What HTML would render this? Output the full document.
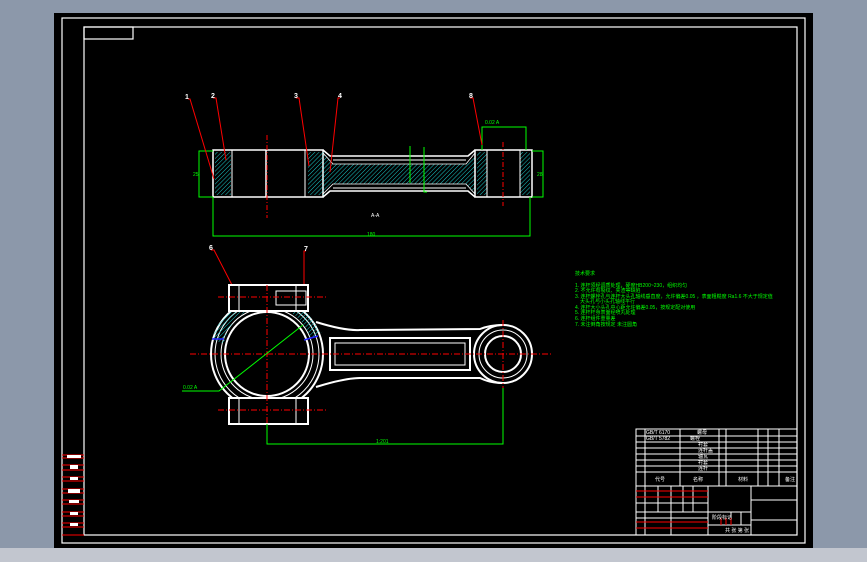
<!DOCTYPE html>
<html><head><style>
html,body{margin:0;padding:0;width:867px;height:562px;overflow:hidden;background:#8c98aa}
svg{display:block}
text{font-family:"Liberation Sans","Noto Sans CJK SC",sans-serif}
</style></head><body>
<svg width="867" height="562" viewBox="0 0 867 562" xmlns="http://www.w3.org/2000/svg">
<defs>
<pattern id="h" width="3" height="3" patternUnits="userSpaceOnUse" patternTransform="rotate(45)">
<line x1="0" y1="0" x2="0" y2="3" stroke="#19c8c8" stroke-width="1"/></pattern>
</defs>
<rect x="0" y="548" width="867" height="14" fill="#c2c6cf"/>
<rect x="54" y="13" width="759" height="535" fill="#000"/>
<g fill="none" stroke="#fff" stroke-width="1.2">
<rect x="62" y="18" width="743" height="525"/>
<rect x="84" y="27" width="713" height="508"/>
<rect x="84" y="27" width="49" height="12"/>
</g>
<g stroke="#f00" stroke-width="1">
<line x1="62" y1="455" x2="84" y2="455"/><line x1="62" y1="458" x2="84" y2="458"/>
<line x1="62" y1="465" x2="84" y2="465"/><line x1="62" y1="470" x2="84" y2="470"/>
<line x1="62" y1="477" x2="84" y2="477"/><line x1="62" y1="481" x2="84" y2="481"/>
<line x1="62" y1="489" x2="84" y2="489"/><line x1="62" y1="493" x2="84" y2="493"/>
<line x1="62" y1="500" x2="84" y2="500"/><line x1="62" y1="504" x2="84" y2="504"/>
<line x1="62" y1="512" x2="84" y2="512"/><line x1="62" y1="516" x2="84" y2="516"/>
<line x1="62" y1="523" x2="84" y2="523"/><line x1="62" y1="527" x2="84" y2="527"/>
<line x1="62" y1="535" x2="84" y2="535"/>
</g>
<g fill="#fff"><rect x="67" y="455" width="14" height="3"/><rect x="70" y="465" width="8" height="4"/><rect x="70" y="477" width="8" height="3"/><rect x="68" y="489" width="12" height="4"/><rect x="69" y="500" width="10" height="3"/><rect x="70" y="512" width="8" height="3"/><rect x="70" y="523" width="8" height="3"/></g>

<!-- TOP VIEW -->
<rect x="213" y="150" width="110" height="47" fill="none" stroke="#fff" stroke-width="1.5"/>
<rect x="215" y="152" width="16" height="43" fill="url(#h)"/>
<line x1="266" y1="150" x2="266" y2="197" stroke="#fff" stroke-width="1.5"/>
<line x1="232" y1="150" x2="232" y2="197" stroke="#fff"/>
<line x1="305" y1="150" x2="305" y2="197" stroke="#fff"/>
<rect x="308" y="152" width="16" height="43" fill="url(#h)"/>
<path d="M323 150 L330 156 L468 156 L475 150 M323 197 L330 191 L468 191 L475 197" fill="none" stroke="#fff" stroke-width="1.5"/>
<path d="M323 153 L333 164 L466 164 L475 153 L475 194 L466 184 L333 184 L323 194Z" fill="url(#h)" stroke="#fff" stroke-width="0.8"/>
<line x1="333" y1="160" x2="466" y2="160" stroke="#fff"/><line x1="333" y1="188" x2="466" y2="188" stroke="#fff"/>
<rect x="475" y="150" width="57" height="47" fill="none" stroke="#fff" stroke-width="1.5"/>
<rect x="477" y="152" width="10" height="43" fill="url(#h)"/>
<rect x="520" y="152" width="10" height="43" fill="url(#h)"/>
<line x1="487" y1="150" x2="487" y2="197" stroke="#fff"/><line x1="520" y1="150" x2="520" y2="197" stroke="#fff"/>
<g stroke="#f00" stroke-dasharray="5 2 1 2"><line x1="267" y1="135" x2="267" y2="218"/><line x1="503" y1="142" x2="503" y2="206"/></g>
<g fill="none" stroke="#0f0" stroke-width="1">
<path d="M213 151 H199 V197 H213"/><path d="M532 151 H543 V197 H532"/>
<path d="M213 197 V236 H530 V197"/><path d="M482 150 V127 H526 V150"/>
<path d="M410 146 V183"/><path d="M424 147 V192 H427"/>
</g>
<g fill="#0f0" font-size="5"><text x="367" y="236">180</text><text x="485" y="124">0.02 A</text><text x="193" y="176">25</text><text x="537" y="176">28</text></g>
<text x="371" y="217" fill="#fff" font-size="5">A-A</text>
<g stroke="#f00" stroke-width="1" fill="none">
<path d="M188 99 L190 99 L214 179"/><path d="M213 98 L216 98 L226 160"/><path d="M296 98 L299 98 L309 166"/><path d="M340 98 L338 98 L330 172"/><path d="M470 98 L473 98 L482 145"/>
<path d="M211 250 L214 250 L232 285"/><path d="M306 251 L304 251 L304 302"/>
</g>
<g fill="#fff" font-size="7" font-weight="bold"><text x="185" y="99">1</text><text x="211" y="98">2</text><text x="294" y="98">3</text><text x="338" y="98">4</text><text x="469" y="98">8</text><text x="209" y="250">6</text><text x="304" y="251">7</text></g>

<!-- BOTTOM VIEW -->
<path d="M316 322 Q345 331 360 330 L480 329 Q490 325 503 325 M316 387 Q345 378 360 378 L480 378 Q490 383 503 383" fill="none" stroke="#fff" stroke-width="2"/>
<g fill="none" stroke="#fff" stroke-width="2">
<circle cx="267" cy="354" r="56"/><circle cx="267" cy="354" r="42"/>
<circle cx="503" cy="354" r="29"/><circle cx="503" cy="354" r="18"/>
<rect x="330" y="338" width="140" height="32"/>
</g>
<g fill="none" stroke="#fff" stroke-width="1">
<circle cx="267" cy="354" r="52"/><circle cx="267" cy="354" r="46"/><circle cx="503" cy="354" r="24"/>
<rect x="335" y="343" width="130" height="22"/>
</g>
<path d="M212 339 A57 57 0 0 1 320 333 L337 325 L310 338 A44 44 0 0 0 224 344 Z" fill="url(#h)"/>
<g fill="#000" stroke="#fff" stroke-width="2">
<rect x="229" y="285" width="79" height="26"/><rect x="229" y="398" width="79" height="26"/>
</g>
<g fill="none" stroke="#fff" stroke-width="1">
<line x1="239" y1="285" x2="239" y2="311"/><line x1="296" y1="285" x2="296" y2="311"/>
<line x1="239" y1="398" x2="239" y2="424"/><line x1="296" y1="398" x2="296" y2="424"/>
<rect x="276" y="291" width="30" height="14"/>
</g>
<g stroke="#f00" stroke-dasharray="6 2 1 2">
<line x1="190" y1="354" x2="553" y2="354"/><line x1="267" y1="285" x2="267" y2="424"/><line x1="503" y1="320" x2="503" y2="388"/>
<line x1="218" y1="297" x2="326" y2="297"/><line x1="218" y1="410" x2="326" y2="410"/>
</g>
<g stroke="#22f" stroke-width="1.5"><path d="M212 339 L224 339 M304 340 L318 336"/></g>
<g fill="none" stroke="#0f0"><path d="M267 424 V444 H503 V388"/><path d="M303 325 L219 391 H182"/></g>
<g fill="#0f0" font-size="5"><text x="376" y="443">1:201</text><text x="183" y="389">0.02 A</text></g>

<g fill="#0f0" font-size="5"><text x="575" y="275">技术要求</text>
<text x="575" y="287">1. 连杆须经调质处理，硬度HB200~230，组织均匀</text>
<text x="575" y="292">2. 不允许有裂纹、夹渣等缺陷</text>
<text x="575" y="298">3. 连杆螺栓孔与连杆大头孔轴线垂直度，允许偏差0.05 ，表面粗糙度 Ra1.6 不大于规定值</text>
<text x="580" y="303">大头孔与小头孔轴线平行</text>
<text x="575" y="309">4. 连杆大小头孔中心距允许偏差0.05，按规定配对使用</text>
<text x="575" y="314">5. 连杆杆身表面经喷丸处理</text>
<text x="575" y="320">6. 连杆组件重量差</text>
<text x="575" y="326">7. 未注倒角按规定 未注圆角</text></g>

<g fill="none" stroke="#fff" stroke-width="1">
<rect x="636" y="429" width="161" height="106"/>
<path d="M636 436 H797 M636 442 H797 M636 448 H797 M636 454 H797 M636 460 H797 M636 466 H797 M636 472 H797 M636 486 H797"/>
<path d="M645 429 V486 M680 429 V486 M719 429 V486 M726 429 V486 M758 429 V486 M768 429 V486 M779 429 V486"/>
<path d="M708 486 V535 M751 486 V535 M751 500 H797 M751 520 H797"/>
<path d="M636 503 H708 M636 512 H751 M636 518 H708 M708 525 H751"/>
<path d="M645 486 V535 M658 486 V512 M671 486 V535 M683 486 V512 M693 486 V512"/>
<path d="M731 512 V525 M741 512 V525"/>
</g>
<g stroke="#f00"><path d="M636 491 H708 M636 497 H708 M636 522 H708 M636 528 H708 M721 518 V525 M726 518 V525 M731 518 V525"/></g>
<g fill="#fff" font-size="5"><text x="646" y="434">GB/T 6170</text><text x="646" y="440">GB/T 5782</text><text x="697" y="434">螺母</text><text x="690" y="440">螺栓</text><text x="698" y="446">衬套</text><text x="698" y="452">连杆盖</text><text x="698" y="458">轴瓦</text><text x="698" y="464">衬套</text><text x="698" y="470">连杆</text>
<text x="655" y="481">代号</text><text x="693" y="481">名称</text><text x="738" y="481">材料</text><text x="785" y="481">备注</text><text x="712" y="519">阶段标记</text><text x="725" y="532">共 张 第 张</text></g>
</svg>
</body></html>
